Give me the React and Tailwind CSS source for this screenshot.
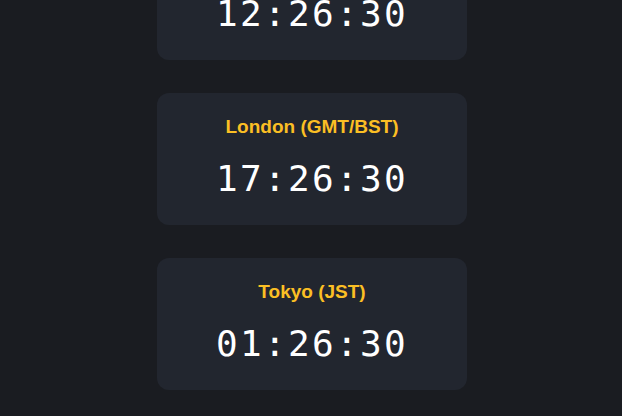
import React from "react";

const zones = [
  { city: "New York (EST/EDT)", time: "12:26:30" },
  { city: "London (GMT/BST)", time: "17:26:30" },
  { city: "Tokyo (JST)", time: "01:26:30" },
];

const ClockCard = ({ city, time }) => (
  <div className="w-[310px] rounded-xl bg-[#22262f] pt-[20px] pb-[26px] text-center">
    <h2 className="text-[19px] leading-[28px] font-bold text-[#fbbf24] font-['Liberation_Sans',Arial,sans-serif]">
      {city}
    </h2>
    <div className="mt-[18px] text-[36px] leading-[40px] tracking-[2.3px] text-white font-['DejaVu_Sans_Mono',monospace]">
      {time}
    </div>
  </div>
);

export default function App() {
  return (
    <div className="h-[416px] overflow-hidden bg-[#1a1c21]">
      <div className="-mt-[72px] flex flex-col items-center gap-[33px] pl-[2px]">
        {zones.map((z) => (
          <ClockCard key={z.city} {...z} />
        ))}
      </div>
    </div>
  );
}
